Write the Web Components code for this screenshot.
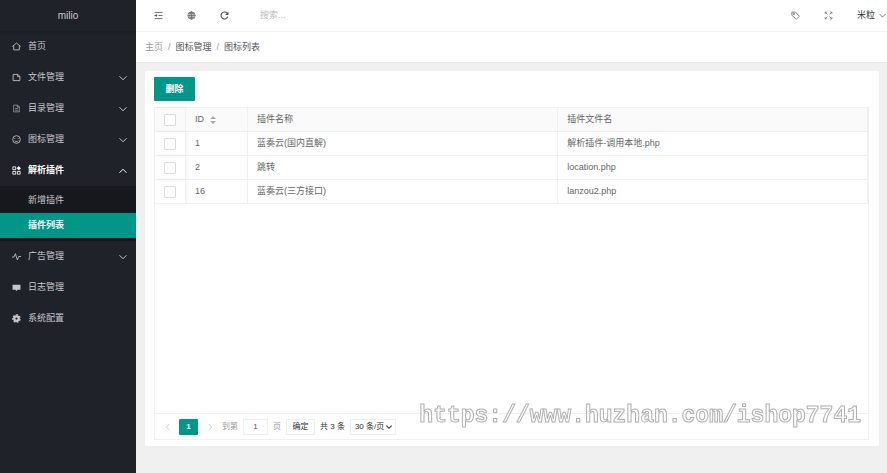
<!DOCTYPE html>
<html lang="zh">
<head>
<meta charset="utf-8">
<title>milio</title>
<style>
html, body { height: 100%; }
body {
  margin: 0;
  font: 9px/1.4 "Liberation Sans", "Noto Sans CJK SC", sans-serif;
  color: #666;
  background: #f0f0f0;
  --green: #009688;
  --dark: #20222a;
  --line: #f0f0f0;
}
</style>
</head>
<body>

<admin-layout>
  <side-menu slot="side" logo="milio">
    <menu-item icon="home" label="首页"></menu-item>
    <menu-item icon="file" label="文件管理" arrow="down"></menu-item>
    <menu-item icon="doc" label="目录管理" arrow="down"></menu-item>
    <menu-item icon="face" label="图标管理" arrow="down"></menu-item>
    <menu-item icon="grid" label="解析插件" arrow="up" open>
      <sub-item>新增插件</sub-item>
      <sub-item active>插件列表</sub-item>
    </menu-item>
    <menu-item icon="pulse" label="广告管理" arrow="down"></menu-item>
    <menu-item icon="chat" label="日志管理"></menu-item>
    <menu-item icon="gear" label="系统配置"></menu-item>
  </side-menu>
  <top-bar slot="top" user="米粒"></top-bar>
  <bread-crumb slot="top" home="主页" group="图标管理" page="图标列表"></bread-crumb>
  <plugin-card></plugin-card>
</admin-layout>
<water-mark>https://www.huzhan.com/ishop7741</water-mark>

<script>
const icons = {
  home: '<path d="M0.500 8 8 2l7.500 6M3 6.500V14h10V6.500"/>',
  file: '<path d="M2 2.500h8.500L14 6v7.500H2zM10 2.500V6.500h4"/>',
  doc: '<path opacity=".7" d="M3 2h7l3 3v9H3zM9.500 2v3.500H13M5.500 8h5M5.500 11h5"/>',
  face: '<circle cx="8" cy="8" r="6.800"/><path d="M5 5.500v1.500M11 5.500v1.500M4.800 10c1.500 2.200 4.900 2.200 6.400 0"/>',
  grid: '<path d="M1.500 1.500h5v5h-5zM1.500 9.500h5v5h-5zM9.500 9.500h5v5h-5z"/><path fill="currentColor" d="M12 1 15 4 12 7 9 4z"/>',
  pulse: '<path d="M0 9h3.500L6 3l3.500 11L12 8h4"/>',
  chat: '<path fill="currentColor" stroke="none" d="M1 3h14v9h-5l-2 2-2-2H1z"/>',
  gear: '<circle cx="8" cy="8" r="4" stroke-width="4"/><path stroke-width="2.500" stroke-dasharray="3 2.500" d="M8 1.500a6.500 6.500 0 1 1 0 13a6.500 6.500 0 1 1 0-13"/>',
  shrink: '<path d="M1 2.500h14M8 8h7M1 13.500h14M1 8h5"/><path fill="currentColor" stroke="none" d="M5 5.200v5.600L1 8z"/>',
  globe: '<g stroke-width="1.200"><circle cx="8" cy="8" r="6.500"/><ellipse cx="8" cy="8" rx="3" ry="6.500"/><path d="M1.500 8h13M8 1.500v13M2.500 4.800h11M2.500 11.200h11"/></g>',
  refresh: '<path stroke-width="2" d="M13.800 10A6.200 6.200 0 1 1 12.500 3.700"/><path fill="currentColor" stroke="none" d="M15 1v6H9z"/>',
  tag: '<path d="M1.500 2 8 2l7 7.500-5.500 5L1.500 7.500z"/><circle cx="5" cy="5.300" r="1.300"/>',
  full: '<path d="M6 6 2 2M2 5V2h3M10 6l4-4M11 2h3v3M6 10l-4 4M2 11v3h3M10 10l4 4M14 11v3h-3"/>',
  down: '<path d="m1 4.500 7 7 7-7"/>',
  up: '<path d="m1 11.500 7-7 7 7"/>',
  left: '<path d="M11 1.500 4.500 8l6.500 6.500"/>',
  right: '<path d="M5 1.500 11.500 8 5 14.500"/>'
};

const icon = (name, size = 9, stroke = 1.5) => `<svg width="${size}" height="${size}" viewBox="0 0 16 16" fill="none" stroke="currentColor" stroke-width="${stroke}" aria-hidden="true">${icons[name]}</svg>`;

const base = `
  *, :host { box-sizing: border-box; }
  svg { display: block; flex: none; }
  a { color: inherit; text-decoration: none; }
  button, input, select { font: inherit; color: inherit; margin: 0; }
`;

class BaseElement extends HTMLElement {
  constructor() {
    super();
    this.attachShadow({ mode: 'open' });
  }

  connectedCallback() {
    this.shadowRoot.innerHTML = `<style>${base}</style>` + this.render();
  }
}

class AdminLayout extends BaseElement {
  render() {
    return `
      <style>
        :host { display: flex; min-height: 100vh; }
        .side { flex: 0 0 136px; background: var(--dark); }
        .main { flex: 1; min-width: 0; display: flex; flex-direction: column; }
        main { flex: 1; display: flex; padding: 8px 8px 27px 9px; }
      </style>
      <aside class="side"><slot name="side"></slot></aside>
      <div class="main">
        <slot name="top"></slot>
        <main><slot></slot></main>
      </div>`;
  }
}
customElements.define('admin-layout', AdminLayout);

class SideMenu extends BaseElement {
  render() {
    return `
      <style>
        :host { display: block; color: #c6c7c9; }
        .logo { display: flex; align-items: center; justify-content: center; height: 31px; font-size: 10px; box-shadow: 0 1px 2px rgba(0,0,0,.15); }
      </style>
      <div class="logo">${this.getAttribute('logo')}</div>
      <nav><slot></slot></nav>`;
  }
}
customElements.define('side-menu', SideMenu);

class MenuItem extends BaseElement {
  render() {
    const arrow = this.getAttribute('arrow');
    return `
      <style>
        :host { display: block; }
        :host([open]) a { color: #fff; font-weight: bold; }
        a { display: flex; align-items: center; gap: 7px; height: 31px; padding: 0 9px 0 12px; }
        span { flex: 1; }
        .sub { display: none; background: #16181d; padding: 2px 0 3px; }
        :host([open]) .sub { display: block; }
      </style>
      <a href="#">${icon(this.getAttribute('icon'))}<span>${this.getAttribute('label')}</span>${arrow ? icon(arrow, 8, 2) : ''}</a>
      <div class="sub"><slot></slot></div>`;
  }
}
customElements.define('menu-item', MenuItem);

class SubItem extends BaseElement {
  render() {
    return `
      <style>
        :host { display: block; }
        a { display: flex; align-items: center; height: 25px; padding-left: 28px; }
        :host([active]) a { background: var(--green); color: #fff; font-weight: bold; }
      </style>
      <a href="#"><slot></slot></a>`;
  }
}
customElements.define('sub-item', SubItem);

class TopBar extends BaseElement {
  render() {
    return `
      <style>
        :host { display: flex; align-items: center; height: 32px; padding: 0 1px 0 18px; background: #fff; border-bottom: 1px solid #f2f2f2; color: #555; }
        .tools, .right { display: flex; align-items: center; gap: 24px; }
        input { flex: 1; min-width: 0; margin-left: 31px; border: 0; padding: 0; background: none; outline: none; }
        input::placeholder { color: #bbb; }
        .right { color: #777; }
        .user { display: flex; align-items: center; gap: 4px; color: #333; }
      </style>
      <div class="tools">
        <a href="#" aria-label="menu">${icon('shrink')}</a>
        <a href="#" aria-label="site">${icon('globe')}</a>
        <a href="#" aria-label="refresh">${icon('refresh')}</a>
      </div>
      <input type="text" placeholder="搜索..." aria-label="搜索">
      <div class="right">
        <a href="#" aria-label="tag">${icon('tag')}</a>
        <a href="#" aria-label="fullscreen">${icon('full')}</a>
        <a href="#" class="user">${this.getAttribute('user')}${icon('down', 7)}</a>
      </div>`;
  }
}
customElements.define('top-bar', TopBar);

class BreadCrumb extends BaseElement {
  render() {
    return `
      <style>
        :host { display: flex; align-items: center; gap: 5px; height: 31px; padding: 0 9px; background: #fff; border-bottom: 1px solid #e8e8e8; color: #555; }
        a, i { color: #999; font-style: normal; }
      </style>
      <a href="#">${this.getAttribute('home')}</a><i>/</i>
      <span>${this.getAttribute('group')}</span><i>/</i>
      <span>${this.getAttribute('page')}</span>`;
  }
}
customElements.define('bread-crumb', BreadCrumb);

const rows = [
  ['1', '蓝奏云(国内直解)', '解析插件-调用本地.php'],
  ['2', '跳转', 'location.php'],
  ['16', '蓝奏云(三方接口)', 'lanzou2.php']
];

class PluginCard extends BaseElement {
  render() {
    return `
      <style>
        :host { flex: 1; min-width: 0; display: flex; flex-direction: column; padding: 6px 10px 6px 9px; background: #fff; border-radius: 1px; }
        .del { align-self: flex-start; width: 41px; height: 24px; padding: 0; border: 0; border-radius: 1px; background: var(--green); color: #fff; font-weight: bold; }
        .box { flex: 1; display: flex; flex-direction: column; margin-top: 6px; border: 1px solid var(--line); }
        .body { flex: 1; }
        table { width: 100%; table-layout: fixed; border-collapse: separate; border-spacing: 0; }
        th, td { height: 24px; padding: 0 9px; text-align: left; font-weight: normal; border-right: 1px solid var(--line); border-bottom: 1px solid var(--line); }
        th { background: #fafafa; }
        .check { width: 31px; box-shadow: 1px 0 4px rgba(0,0,0,.06); }
        .id { width: 62px; }
        .name { width: 43.5%; }
        input { display: block; appearance: none; width: 12px; height: 12px; border: 1px solid #ddd; border-radius: 1px; background: #fff; }
        input:checked { background: var(--green); }
        .sort { display: flex; align-items: center; gap: 6px; padding: 0; border: 0; background: none; color: inherit; }
      </style>
      <button class="del" type="button">删除</button>
      <div class="box">
        <div class="body">
          <table>
            <thead>
              <tr>
                <th class="check"><input type="checkbox" aria-label="全选"></th>
                <th class="id"><button class="sort" type="button">ID <svg width="6" height="8" viewBox="0 0 6 8" fill="#aaa"><path d="M3 0l3 3H0zM3 8l3-3H0z"/></svg></button></th>
                <th class="name">插件名称</th>
                <th>插件文件名</th>
              </tr>
            </thead>
            <tbody>
              ${rows.map(([id, name, file]) => `<tr><td class="check"><input type="checkbox" aria-label="${name}"></td><td>${id}</td><td>${name}</td><td>${file}</td></tr>`).join('')}
            </tbody>
          </table>
        </div>
        <page-bar></page-bar>
      </div>`;
  }
}
customElements.define('plugin-card', PluginCard);

class PageBar extends BaseElement {
  render() {
    return `
      <style>
        :host { display: flex; align-items: center; height: 26px; padding: 0 9px; border-top: 1px solid var(--line); font-size: 8px; color: #333; white-space: nowrap; }
        .cur { display: flex; align-items: center; justify-content: center; width: 19px; height: 16px; margin: 0 8px 0 7px; border-radius: 1px; background: var(--green); color: #fff; font-weight: bold; }
        .arrow { color: #bbb; }
        label { display: flex; align-items: center; gap: 5px; margin-left: 8px; color: #999; }
        input { width: 25px; height: 16px; padding: 0; border: 1px solid #eee; text-align: center; color: #555; }
        button { width: 29px; height: 16px; margin: 0 5px; padding: 0; border: 1px solid #eee; background: #fff; }
        .limit { display: grid; align-items: center; height: 16px; margin-left: 5px; border: 1px solid #eee; }
        select { appearance: none; grid-area: 1 / 1; width: 44px; padding: 0 0 0 4px; border: 0; background: none; }
        .limit svg { grid-area: 1 / 1; justify-self: end; margin-right: 3px; pointer-events: none; }
      </style>
      <a href="#" class="arrow" aria-label="上一页">${icon('left', 8)}</a>
      <a href="#" class="cur">1</a>
      <a href="#" class="arrow" aria-label="下一页">${icon('right', 8)}</a>
      <label>到第 <input type="text" value="1"> 页</label>
      <button type="button">确定</button>
      <span>共 3 条</span>
      <div class="limit"><select aria-label="每页条数"><option>30 条/页</option></select>${icon('down', 6, 3)}</div>`;
  }
}
customElements.define('page-bar', PageBar);

// outlined text laid over the bottom right corner
class WaterMark extends BaseElement {
  render() {
    return `
      <style>
        :host { position: fixed; right: 26px; bottom: 42px; pointer-events: none; font: bold 23px/30px "Liberation Mono", monospace; color: #fff; -webkit-text-stroke: 1px #b0b0b0; white-space: nowrap; }
      </style>
      <slot></slot>`;
  }
}
customElements.define('water-mark', WaterMark);
</script>
</body>
</html>
